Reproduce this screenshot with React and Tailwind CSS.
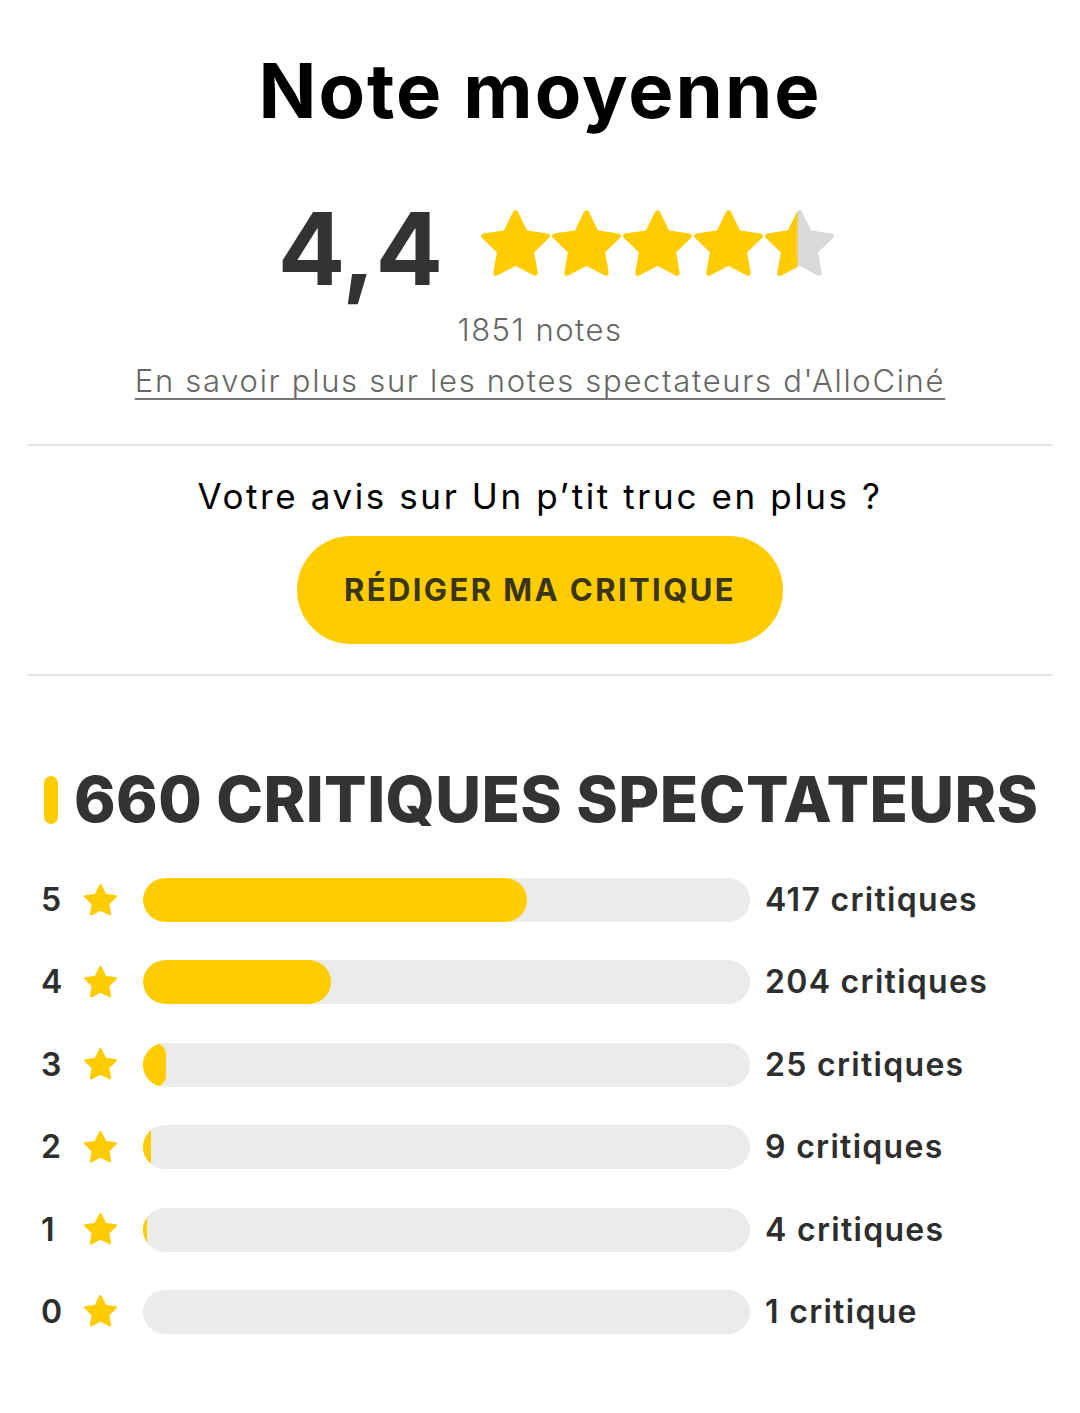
import React from "react";

const STAR = "M12 2.6l2.95 5.98 6.6.96-4.78 4.65 1.13 6.57L12 17.66l-5.9 3.1 1.13-6.57L2.45 9.54l6.6-.96z";

function Star({ size, fill = "#fecc00", half }) {
  const id = React.useId();
  return (
    <svg width={size} height={size} viewBox="1.6 1.7 20.8 20.8" className="shrink-0">
      {half !== undefined && (
        <defs>
          <clipPath id={id}>
            <rect x="0" y="0" width={1.6 + 20.8 * half} height="24" />
          </clipPath>
        </defs>
      )}
      {half !== undefined ? (
        <>
          <path d={STAR} fill="#d9d9d9" stroke="#d9d9d9" strokeWidth="1.6" strokeLinejoin="round" />
          <path d={STAR} fill={fill} stroke={fill} strokeWidth="1.6" strokeLinejoin="round" clipPath={`url(#${id})`} />
        </>
      ) : (
        <path d={STAR} fill={fill} stroke={fill} strokeWidth="1.6" strokeLinejoin="round" />
      )}
    </svg>
  );
}

const rows = [
  { n: 5, c: 417, label: "417 critiques" },
  { n: 4, c: 204, label: "204 critiques" },
  { n: 3, c: 25, label: "25 critiques" },
  { n: 2, c: 9, label: "9 critiques" },
  { n: 1, c: 4, label: "4 critiques" },
  { n: 0, c: 0, label: "1 critique" },
];

export default function App() {
  return (
    <div className="w-[1080px] min-h-[1413px] bg-white px-[28px] font-['Inter',sans-serif]">
      <h1 className="pt-[52px] text-center text-[76px] leading-none font-bold text-black tracking-[2px]">
        Note moyenne
      </h1>
      <div className="mt-[71px] flex items-center justify-center gap-[38px] pl-[32px]">
        <span className="text-[100px] leading-none font-bold text-[#333]">4,4</span>
        <div className="flex items-center gap-[2px] -mt-[10px]">
          <Star size={69} />
          <Star size={69} />
          <Star size={69} />
          <Star size={69} />
          <Star size={69} half={0.47} />
        </div>
      </div>
      <p className="mt-[15px] text-center text-[31px] leading-none font-light text-[#666] tracking-[1.5px]">1851 notes</p>
      <p className="mt-[20px] text-center text-[31px] leading-none font-light text-[#666] tracking-[1.7px]">
        <a className="underline decoration-[#777] underline-offset-[6px] decoration-[2px]">
          En savoir plus sur les notes spectateurs d'AlloCiné
        </a>
      </p>
      <hr className="mt-[48px] border-t-2 border-[#e3e3e3]" />
      <p className="mt-[33px] text-center text-[35px] leading-none font-normal text-black tracking-[2.6px]">
        Votre avis sur Un p’tit truc en plus ?
      </p>
      <div className="mt-[22px] flex justify-center">
        <button className="h-[108px] w-[486px] rounded-full bg-[#fecc00] text-[31px] font-bold text-[#3b3517] tracking-[2.4px]">
          RÉDIGER MA CRITIQUE
        </button>
      </div>
      <hr className="mt-[30px] border-t-2 border-[#e3e3e3]" />
      <div className="mt-[92px] flex items-center gap-[16px] pl-[16px]">
        <span className="h-[48px] w-[14px] rounded-full bg-[#fecc00]" />
        <h2 className="text-[63px] leading-none font-extrabold text-[#333] tracking-[0.4px]">660 CRITIQUES SPECTATEURS</h2>
      </div>
      <div className="mt-[47px] flex flex-col gap-[38.4px] pl-[13px]">
        {rows.map((r) => (
          <div key={r.n} className="flex h-[44px] items-center">
            <span className="w-[43px] text-[32px] leading-none font-semibold text-[#2e2e2e]">{r.n}</span>
            <Star size={33} />
            <div className="ml-[26px] h-[44px] w-[607px] overflow-hidden rounded-full bg-[#ebebeb]">
              <div className="h-full rounded-full bg-[#fecc00]" style={{ width: `${(r.c / 660) * 100}%` }} />
            </div>
            <span className="ml-[15px] text-[32px] leading-none font-semibold text-[#2e2e2e] tracking-[1.3px]">{r.label}</span>
          </div>
        ))}
      </div>
    </div>
  );
}
